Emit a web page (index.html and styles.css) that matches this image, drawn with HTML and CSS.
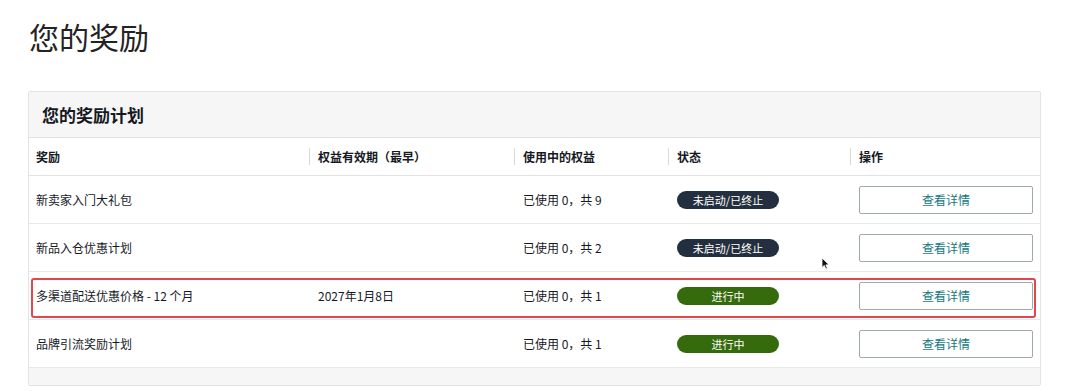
FILE: index.html
```html
<!DOCTYPE html>
<html lang="zh-CN">
<head>
<meta charset="utf-8">
<title>您的奖励</title>
<link rel="stylesheet" href="styles.css">
</head>
<body>
<main class="page">
  <h1 class="page-title">您的奖励</h1>
  <section class="card">
    <header class="card-head"><h2>您的奖励计划</h2></header>
    <div class="row row-head">
      <div class="hcell first">奖励</div>
      <div class="hcell">权益有效期（最早）</div>
      <div class="hcell">使用中的权益</div>
      <div class="hcell">状态</div>
      <div class="hcell">操作</div>
    </div>
    <div class="row">
      <div class="cell first">新卖家入门大礼包</div>
      <div class="cell"></div>
      <div class="cell">已使用 0，共 9</div>
      <div class="cell"><span class="badge badge-off">未启动/已终止</span></div>
      <div class="cell"><button class="btn">查看详情</button></div>
    </div>
    <div class="row">
      <div class="cell first">新品入仓优惠计划</div>
      <div class="cell"></div>
      <div class="cell">已使用 0，共 2</div>
      <div class="cell"><span class="badge badge-off">未启动/已终止</span></div>
      <div class="cell"><button class="btn">查看详情</button></div>
    </div>
    <div class="row row-marked">
      <div class="cell first">多渠道配送优惠价格 - 12 个月</div>
      <div class="cell">2027年1月8日</div>
      <div class="cell">已使用 0，共 1</div>
      <div class="cell"><span class="badge badge-on">进行中</span></div>
      <div class="cell"><button class="btn">查看详情</button></div>
      <div class="mark"></div>
    </div>
    <div class="row">
      <div class="cell first">品牌引流奖励计划</div>
      <div class="cell"></div>
      <div class="cell">已使用 0，共 1</div>
      <div class="cell"><span class="badge badge-on">进行中</span></div>
      <div class="cell"><button class="btn">查看详情</button></div>
    </div>
    <footer class="card-foot"></footer>
  </section>
  <svg class="cursor" width="9" height="13" viewBox="0 0 9 13"><path d="M1 1 L1 10.5 L3.3 8.4 L4.9 12 L6.4 11.3 L4.9 7.9 L8 7.7 Z" fill="#111" stroke="#fff" stroke-width="0.8" stroke-linejoin="round"/></svg>
</main>
</body>
</html>
```

FILE: styles.css
```css
* { box-sizing: border-box; }

body {
  margin: 0;
  background: #ffffff;
  color: #16191f;
  font-family: "Noto Sans CJK SC", "Noto Sans", "Liberation Sans", sans-serif;
  font-size: 12px;
}

.page {
  position: relative;
  padding: 16px 39px 0 28px;
}

.page-title {
  margin: 0 0 35px 1px;
  font-size: 30px;
  line-height: 40px;
  font-weight: 400;
  color: #232323;
}

.card {
  border: 1px solid #e3e3e3;
  border-radius: 2px;
  background: #fff;
}

.card-head {
  height: 46px;
  background: #f6f6f6;
  border-bottom: 1px solid #e3e3e3;
  padding-left: 13px;
  display: flex;
  align-items: center;
}

.card-head h2 {
  margin: 0;
  font-size: 17px;
  font-weight: 700;
  color: #16191f;
}

.row {
  display: grid;
  grid-template-columns: 280px 205px 154px 182px 1fr;
  align-items: center;
  height: 48px;
  border-bottom: 1px solid #e8e8e8;
}

.row-head {
  height: 38px;
  border-bottom: 1px solid #e3e3e3;
}

.hcell {
  font-weight: 700;
  font-size: 12px;
  line-height: 17px;
  padding-left: 8px;
  border-left: 1px solid #d9d9d9;
}

.hcell.first {
  border-left: none;
  padding-left: 7px;
}

.cell {
  padding-left: 9px;
  line-height: 18px;
}

.cell.first {
  padding-left: 7px;
}

.badge {
  display: inline-block;
  width: 102px;
  height: 18px;
  line-height: 18px;
  border-radius: 9px;
  text-align: center;
  color: #fff;
  font-size: 11px;
}

.badge-off { background: #232f3e; }
.badge-on { background: #356b0c; }

.btn {
  display: block;
  width: 174px;
  height: 28px;
  border: 1px solid #9fa9b0;
  border-radius: 2px;
  background: #fff;
  color: #14787f;
  font-family: inherit;
  font-size: 12px;
  cursor: pointer;
}

.row-marked { position: relative; }

.mark {
  position: absolute;
  left: 2px;
  right: 4px;
  top: 6px;
  bottom: 1px;
  border: 2px solid #e0474c;
  border-radius: 3px;
  pointer-events: none;
}

.card-foot {
  height: 17px;
  background: #f6f6f6;
}

.cursor {
  position: absolute;
  left: 821px;
  top: 257px;
}
```
